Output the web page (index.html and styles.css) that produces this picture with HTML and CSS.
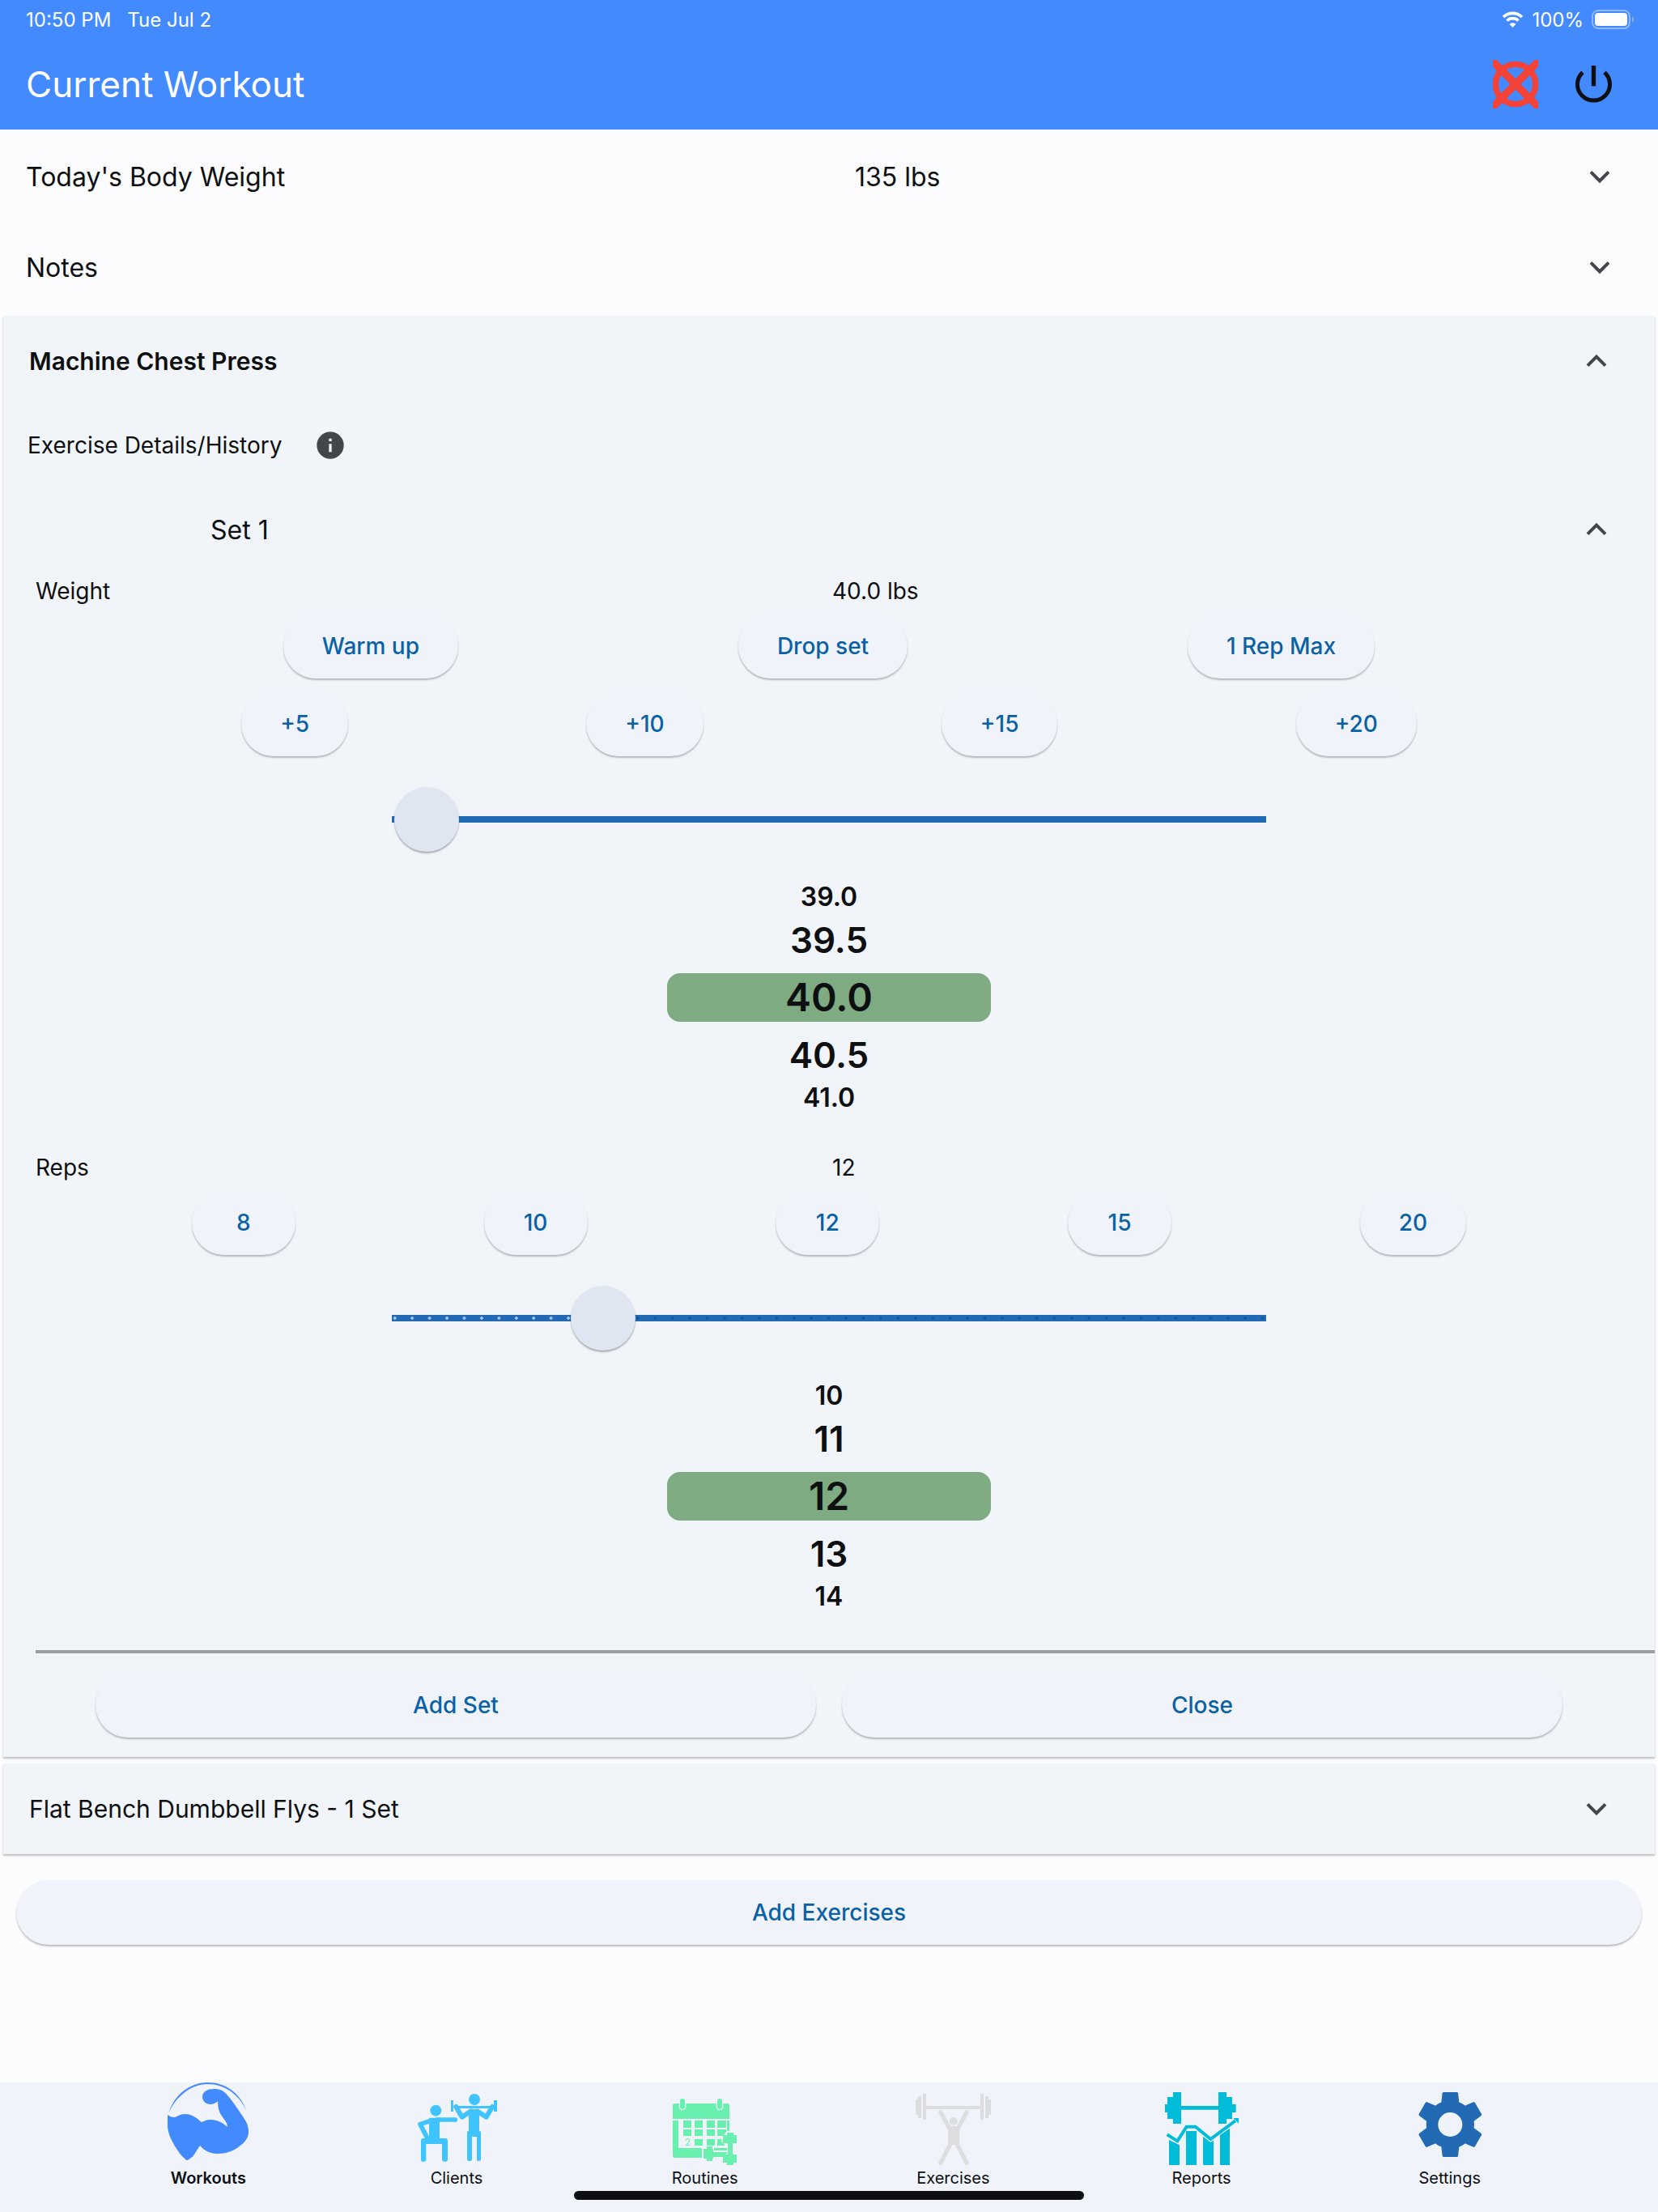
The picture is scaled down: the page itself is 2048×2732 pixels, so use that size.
FILE: index.html
```
<!DOCTYPE html>
<html lang="en">
<head>
    <meta charset="UTF-8">
    <meta name="viewport" content="width=device-width, initial-scale=1.0">
    <title>Current Workout</title>
    <link rel="stylesheet" href="styles.css">
</head>
<body>

    <header class="header">
        <div class="status-bar">
            <span>10:50 PM</span>
            <span>Tue Jul 2</span>
            <div class="status-right">
                <svg class="wifi" viewBox="0 0 27 20">
                    <path d="M2 7a16.500 16.500 0 0 1 23 0M6.500 11.500a10 10 0 0 1 14 0" fill="none" stroke="#fff" stroke-width="3.600"/>
                    <path d="M13.500 20l-4-4.200a6 6 0 0 1 8 0z" fill="#fff"/>
                </svg>
                <span>100%</span>
                <svg class="battery" viewBox="0 0 54 24">
                    <rect x="1" y="1" width="46" height="22" rx="7" fill="none" stroke="#8fb8f8" stroke-width="2"/>
                    <rect x="4" y="4" width="40" height="16" rx="4" fill="#fff"/>
                    <path d="M50 8q4 4 0 8z" fill="#8fb8f8"/>
                </svg>
            </div>
        </div>
        <div class="toolbar">
            <h1>Current Workout</h1>
            <button class="icon-button" aria-label="Cancel workout">
                <svg class="cancel-icon" viewBox="0 0 168 180">
                    <circle cx="84" cy="90" r="74" fill="none" stroke="#f44336" stroke-width="22"/>
                    <path d="M-10-4L178 184M178-4L-10 184" stroke="#f44336" stroke-width="28"/>
                </svg>
            </button>
            <button class="icon-button" aria-label="Finish workout">
                <svg class="power-icon" viewBox="0 0 135 138">
                    <path d="M27 25A60 60 0 1 0 108 25" fill="none" stroke="#0e0f11" stroke-width="15"/>
                    <path d="M67.500 0V76" stroke="#0e0f11" stroke-width="16"/>
                </svg>
            </button>
        </div>
    </header>

    <main class="content">
        <button class="tile tile-columns" aria-expanded="false">
            <span>Today's Body Weight</span>
            <span>135 lbs</span>
            <svg class="chevron" viewBox="0 0 24 24"><path d="M6.500 9.200l5.500 5.500 5.500-5.500"/></svg>
        </button>
        <button class="tile" aria-expanded="false">
            <span>Notes</span>
            <svg class="chevron" viewBox="0 0 24 24"><path d="M6.500 9.200l5.500 5.500 5.500-5.500"/></svg>
        </button>

        <section class="card">
            <button class="tile tile-open" aria-expanded="true">
                <span>Machine Chest Press</span>
                <svg class="chevron" viewBox="0 0 24 24"><path d="M6.500 14.800l5.500-5.500 5.500 5.500"/></svg>
            </button>
            <div class="details">
                <span>Exercise Details/History</span>
                <button class="info-button" aria-label="Exercise details">
                    <svg class="info-icon" viewBox="0 0 24 24">
                        <circle cx="12" cy="12" r="10" fill="#43474b"/>
                        <path d="M11 11h2v6h-2zM11 7h2v2h-2z" fill="#f1f5fa"/>
                    </svg>
                </button>
            </div>
            <button class="tile tile-set" aria-expanded="true">
                <span>Set 1</span>
                <svg class="chevron" viewBox="0 0 24 24"><path d="M6.500 14.800l5.500-5.500 5.500 5.500"/></svg>
            </button>

            <div class="picker">
                <div class="picker-label">
                    <label for="weight">Weight</label>
                    <output for="weight">40.0 lbs</output>
                </div>
                <div class="pills">
                    <button class="pill">Warm up</button>
                    <button class="pill">Drop set</button>
                    <button class="pill">1 Rep Max</button>
                </div>
                <div class="pills">
                    <button class="pill">+5</button>
                    <button class="pill">+10</button>
                    <button class="pill">+15</button>
                    <button class="pill">+20</button>
                </div>
                <div class="slider">
                    <span class="track"></span>
                    <input type="range" id="weight" min="0" max="1100" step="0.5" value="40">
                </div>
                <div class="wheel">
                    <span class="far">39.0</span>
                    <span class="near">39.5</span>
                    <span class="selected">40.0</span>
                    <span class="near">40.5</span>
                    <span class="far">41.0</span>
                </div>
            </div>

            <div class="picker">
                <div class="picker-label">
                    <label for="reps">Reps</label>
                    <output for="reps">12</output>
                </div>
                <div class="pills">
                    <button class="pill">8</button>
                    <button class="pill">10</button>
                    <button class="pill">12</button>
                    <button class="pill">15</button>
                    <button class="pill">20</button>
                </div>
                <div class="slider">
                    <span class="track"></span>
                    <span class="ticks"></span>
                    <input type="range" id="reps" min="0" max="50" value="12">
                </div>
                <div class="wheel">
                    <span class="far">10</span>
                    <span class="near">11</span>
                    <span class="selected">12</span>
                    <span class="near">13</span>
                    <span class="far">14</span>
                </div>
            </div>

            <hr class="divider">
            <div class="card-actions">
                <button class="pill">Add Set</button>
                <button class="pill">Close</button>
            </div>
        </section>

        <section class="card">
            <button class="tile" aria-expanded="false">
                <span>Flat Bench Dumbbell Flys - 1 Set</span>
                <svg class="chevron" viewBox="0 0 24 24"><path d="M6.500 9.200l5.500 5.500 5.500-5.500"/></svg>
            </button>
        </section>

        <button class="pill add-exercises">Add Exercises</button>
    </main>

    <nav class="nav">
        <a class="nav-item active" href="#workouts">
            <svg viewBox="0 0 300 300" fill="#448aff">
                <path d="M4 114C26 42 85 0 149 0c66 0 120 40 143 104C264 44 210 6 149 6 90 6 33 48 4 114z"/>
                <path d="M0 120c8 6 16 9 25 9 12-2 20-12 39-12 22 0 40 10 61 30 10-4 18-9 35-9 24 0 46 12 62 27-1-14-6-20-14-31-12-16-22-30-22-64-8 6-14 11-27 11-18 0-30-12-30-29 0-17 16-28 43-28 24 0 36 8 47 20 20 22 34 44 49 66 16 24 32 42 32 72 0 20-10 36-28 50-22 20-50 32-86 32-30 0-48-10-66-30-10 14-16 26-25 38-8 8-16 12-23 17-12-8-24-20-38-42C14 216 0 186 0 160z"/>
            </svg>
            <span>Workouts</span>
        </a>
        <a class="nav-item" href="#clients">
            <svg viewBox="3 0 300 300" fill="#40c4ff">
                <circle cx="76" cy="104" r="21"/>
                <path d="M51 131h39v78H51zM21 216q0-9 9-9h81q9 0 9 9v69q0 9-10 9t-11-9v-57H40v57q0 9-10 9t-9-9z"/>
                <path d="M80 138h68M60 141l-42 14 28 54" fill="none" stroke="#40c4ff" stroke-width="17" stroke-linejoin="round" stroke-linecap="round"/>
                <circle cx="219" cy="63" r="21"/>
                <path d="M132 66h9v42h-9zM291 66h12v42h-12zM145 87h145v9H145z"/>
                <path d="M198 99h39v82h6v104q0 6-8 6t-7-6v-84h-18v84q0 6-9 6t-9-6V181h6z"/>
                <path d="M151 90l22 38 34-22M285 90l-22 38-34-22" fill="none" stroke="#40c4ff" stroke-width="18" stroke-linejoin="round" stroke-linecap="round"/>
            </svg>
            <span>Clients</span>
        </a>
        <a class="nav-item" href="#routines">
            <svg viewBox="3 0 300 300" fill="#69f0ae">
                <path d="M33 135V86q0-8 8-8h194q8 0 8 8v49zM33 141h21v102h87v36H41q-8 0-8-8zM234 141h9v39h-9z"/>
                <g stroke="#f0f4fa" stroke-width="4">
                    <rect x="58" y="58" width="22" height="43" rx="11"/>
                    <rect x="196" y="58" width="22" height="43" rx="11"/>
                </g>
                <path d="M72 141h30v27H72zM114 141h30v27h-30zM159 141h30v27h-30zM198 141h33v27h-33zM72 174h30v24H72zM114 174h30v24h-30zM159 174h30v24h-30zM198 174h33v10l-12 14h-21zM114 210h30v24h-30zM159 210h30v24h-30zM198 210h16v10l14 14h-30z"/>
                <text x="77" y="234" font-size="36">2</text>
                <path d="M159 237h21v9h3v36h-3v9h-21v-9h-12v-36h12zM186 243h48v9h-48zM183 258h51v6l-15 4v8h-36z"/>
                <path d="M234 186h24v9h12v30h-15v42h15v30h-12v9h-24v-9h-15v-30h18v-42h-18v-30h15z"/>
            </svg>
            <span>Routines</span>
        </a>
        <a class="nav-item" href="#exercises">
            <svg viewBox="0 0 300 300" fill="#dcdddf">
                <path d="M39 42h12v45h201V42h12v96h-12V99H51v39H39zM21 51h12v81H21v-13h-9V62h9zM270 51h12v11h9v57h-9v13h-12z"/>
                <circle cx="152" cy="144" r="15"/>
                <path d="M132 162h42v69h-42z"/>
                <path d="M105 110l34 64M201 110l-34 64M141 228l-36 70M165 228l36 70" stroke="#dcdddf" stroke-width="16" stroke-linecap="round"/>
            </svg>
            <span>Exercises</span>
        </a>
        <a class="nav-item" href="#reports">
            <svg viewBox="0 0 300 300" fill="#00bcd9">
                <path d="M45 36h30v51h138V36h30v18h21v27h14v30h-14v24h-21v18h-30v-52H75v52H45v-18H24v-24h-9V81h9V54h21z"/>
                <path d="M30 213l39 19v74H30zM93 180h39v126H93zM156 200l28 22 11-8v92h-39zM219 194l36-24v136h-36z"/>
                <path d="M23 193l38 24 34-53h33l56 46 92-68" fill="none" stroke="#00bcd9" stroke-width="12"/>
                <path d="M268 132h20v20z"/>
            </svg>
            <span>Reports</span>
        </a>
        <a class="nav-item" href="#settings">
            <svg viewBox="0 0 300 300" fill="#226ab4">
                <circle cx="151" cy="156" r="67" fill="none" stroke="#226ab4" stroke-width="44"/>
                <path id="tooth" d="M117 82l5-42q1-4 5-4h48q4 0 5 4l5 42z"/>
                <use href="#tooth" transform="rotate(60 151 156)"/>
                <use href="#tooth" transform="rotate(120 151 156)"/>
                <use href="#tooth" transform="rotate(180 151 156)"/>
                <use href="#tooth" transform="rotate(240 151 156)"/>
                <use href="#tooth" transform="rotate(300 151 156)"/>
            </svg>
            <span>Settings</span>
        </a>
        <div class="home-indicator"></div>
    </nav>

</body>
</html>
```
FILE: styles.css
```
* {
    box-sizing: border-box;
}

body {
    font-family: 'Inter', 'Liberation Sans', sans-serif;
    font-size: 28px;
    background-color: #fcfcff;
    color: #0e0f11;
    margin: 0;
    min-height: 100vh;
    display: flex;
    flex-direction: column;
}

button {
    font: inherit;
    color: inherit;
    background: none;
    border: none;
    margin: 0;
    padding: 0;
    cursor: pointer;
}

/* Header */
.header {
    background-color: #448aff;
    color: #fff;
}

.status-bar {
    height: 48px;
    padding: 0 28px 0 32px;
    display: flex;
    align-items: center;
    gap: 20px;
    font-size: 24px;
}

.status-right {
    margin-left: auto;
    display: flex;
    align-items: center;
    gap: 10px;
}

.wifi {
    width: 27px;
    height: 20px;
}

.battery {
    width: 54px;
    height: 24px;
}

.toolbar {
    height: 112px;
    padding: 0 32px;
    display: flex;
    align-items: center;
}

h1 {
    flex: 1;
    margin: 0;
    font-size: 44px;
    font-weight: 400;
}

.icon-button {
    width: 96px;
    height: 96px;
    display: flex;
    justify-content: center;
    align-items: center;
}

.cancel-icon {
    width: 56px;
    height: 60px;
}

.power-icon {
    width: 45px;
    height: 46px;
}

/* Expandable rows */
.content {
    flex: 1;
    padding: 2px 0 32px;
}

.tile {
    width: 100%;
    height: 112px;
    padding: 0 48px 0 32px;
    display: flex;
    justify-content: space-between;
    align-items: center;
    font-size: 32px;
    text-align: left;
}

.tile-columns {
    display: grid;
    grid-template-columns: 8fr 7fr 48px;
}

.tile-open {
    font-weight: 600;
}

.tile-set {
    padding-left: 256px;
}

.chevron {
    width: 48px;
    height: 48px;
    fill: none;
    stroke: #43474b;
    stroke-width: 2;
}

.card {
    margin: 4px 4px 8px;
    background-color: #f1f5fa;
    box-shadow: 0 2px 2px rgba(0, 0, 0, 0.25);
}

.card .tile {
    font-size: 30px;
}

.card .tile-set {
    font-size: 32px;
}

.details {
    height: 96px;
    padding-left: 30px;
    display: flex;
    align-items: center;
    gap: 40px;
}

.info-button,
.info-icon {
    display: block;
    width: 40px;
    height: 40px;
}

/* Weight and reps pickers */
.picker {
    padding-bottom: 40px;
}

.picker-label {
    height: 40px;
    padding: 0 32px 0 40px;
    display: grid;
    grid-template-columns: 1fr 1fr;
    align-items: center;
}

.pills {
    height: 96px;
    display: flex;
    justify-content: space-evenly;
    align-items: center;
}

.pill {
    min-width: 128px;
    height: 80px;
    padding: 0 48px;
    border-radius: 40px;
    background-color: #f0f4fa;
    box-shadow: 0 2px 2px rgba(0, 0, 0, 0.25);
    color: #0a61a4;
    font-weight: 500;
}

.slider {
    width: 80%;
    max-width: 1152px;
    height: 140px;
    margin: 0 auto;
    display: grid;
    align-items: center;
}

.slider > * {
    grid-area: 1 / 1;
}

.track {
    height: 8px;
    margin: 0 36px;
    background-color: #226ab4;
}

.ticks {
    height: 4px;
    margin: 0 29px;
    background: linear-gradient(to right, #a3c4ea 24%, #17579c 24%);
    -webkit-mask: radial-gradient(circle, #000 2px, transparent 2px) 0 0 / calc(100% / 51) 4px;
    mask: radial-gradient(circle, #000 2px, transparent 2px) 0 0 / calc(100% / 51) 4px;
}

input[type="range"] {
    -webkit-appearance: none;
    appearance: none;
    z-index: 1;
    width: 100%;
    height: 80px;
    margin: 0;
    background: none;
}

input[type="range"]::-webkit-slider-thumb {
    -webkit-appearance: none;
    width: 80px;
    height: 80px;
    border-radius: 50%;
    background-color: #dfe5f1;
    box-shadow: 0 2px 2px rgba(0, 0, 0, 0.3);
}

.wheel {
    height: 300px;
    display: flex;
    flex-direction: column;
    justify-content: center;
    align-items: center;
    gap: 12px;
    font-weight: 600;
    text-align: center;
}

.wheel .selected {
    width: 400px;
    line-height: 60px;
    border-radius: 16px;
    background-color: #7eab82;
    font-size: 48px;
}

.wheel .near {
    line-height: 58px;
    font-size: 44px;
}

.wheel .far {
    line-height: 24px;
    font-size: 32px;
}

.divider {
    height: 4px;
    margin: 0 0 24px 40px;
    border: none;
    background-color: #9e9e9e;
}

.card-actions {
    padding: 0 114px 24px;
    display: flex;
    gap: 32px;
}

.card-actions .pill {
    flex: 1;
}

.add-exercises {
    display: block;
    width: calc(100% - 40px);
    margin: 32px 20px 0;
}

/* Bottom navigation */
.nav {
    position: relative;
    height: 160px;
    padding: 0 104px;
    display: flex;
    background-color: #f0f4fa;
}

.nav-item {
    flex: 1;
    display: flex;
    flex-direction: column;
    align-items: center;
    gap: 4px;
    color: inherit;
    font-size: 20px;
    line-height: 28px;
    text-decoration: none;
}

.nav-item svg {
    width: 100px;
    height: 100px;
    overflow: visible;
}

.nav-item.active {
    font-weight: 600;
}

.home-indicator {
    position: absolute;
    left: 50%;
    bottom: 15px;
    width: 630px;
    height: 11px;
    margin-left: -315px;
    border-radius: 6px;
    background-color: #0e0f11;
}
```
